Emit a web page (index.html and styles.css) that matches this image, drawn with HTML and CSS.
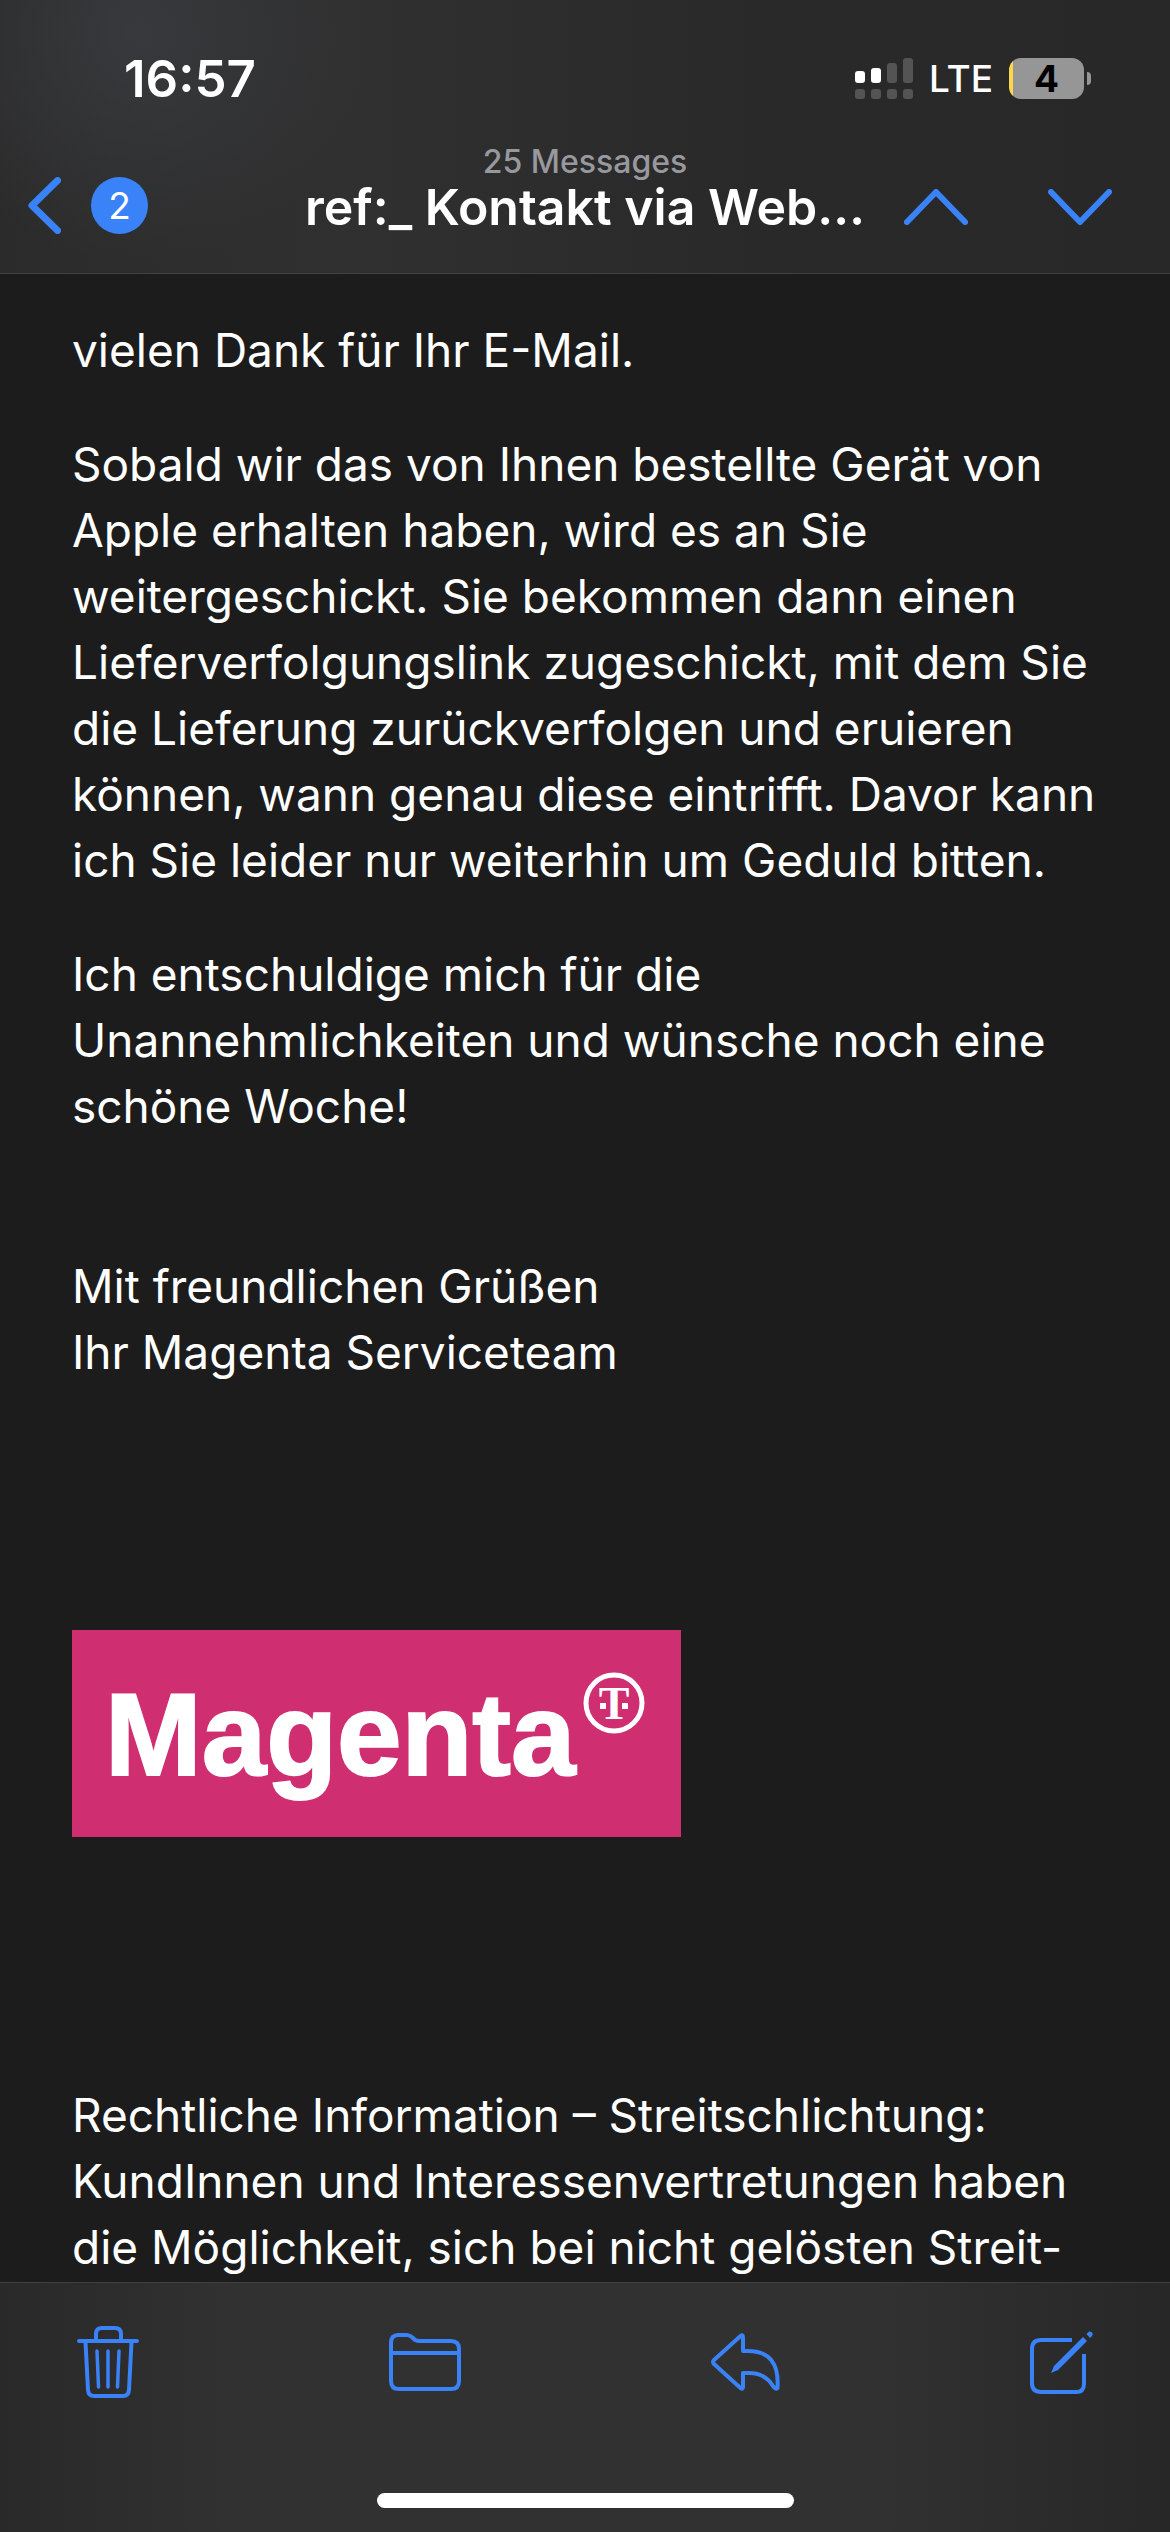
FILE: index.html
```html
<!DOCTYPE html>
<html lang="de">
<head>
<meta charset="utf-8">
<meta name="viewport" content="width=device-width, initial-scale=1">
<title>Mail</title>
<link rel="stylesheet" href="styles.css">
</head>
<body>
<header class="top">
  <div class="status">
    <time class="clock">16:57</time>
    <div class="status-right">
      <svg class="signal" viewBox="0 0 58 41" width="58" height="41" role="img" aria-label="Signal">
        <g fill="#fff"><rect y="13" width="10" height="12" rx="3"/><rect x="16" y="10" width="10" height="15" rx="3"/></g>
        <g fill="#545454"><rect x="32" y="5" width="10" height="20" rx="3"/><rect x="48" width="10" height="25" rx="3"/>
        <rect y="31" width="10" height="10" rx="3"/><rect x="16" y="31" width="10" height="10" rx="3"/><rect x="32" y="31" width="10" height="10" rx="3"/><rect x="48" y="31" width="10" height="10" rx="3"/></g>
      </svg>
      <span class="network">LTE</span>
      <div class="battery"><span class="level">4</span><span class="nub"></span></div>
    </div>
  </div>
  <nav class="nav">
    <button class="back" aria-label="Back">
      <svg viewBox="0 0 33 57" width="33" height="57"><path d="M29.500 3.500 4 28.500 29.500 53.500" fill="none" stroke="currentColor" stroke-width="7" stroke-linecap="round" stroke-linejoin="round"/></svg>
      <span class="badge">2</span>
    </button>
    <div class="heading">
      <p class="count">25 Messages</p>
      <h1 class="title">ref:_ Kontakt via Web…</h1>
    </div>
    <div class="steps">
      <button aria-label="Previous message"><svg viewBox="0 0 64 36" width="64" height="36"><path d="M3 33 32 3 61 33" fill="none" stroke="currentColor" stroke-width="6" stroke-linecap="round" stroke-linejoin="round"/></svg></button>
      <button aria-label="Next message"><svg viewBox="0 0 64 36" width="64" height="36"><path d="M3 3 32 33 61 3" fill="none" stroke="currentColor" stroke-width="6" stroke-linecap="round" stroke-linejoin="round"/></svg></button>
    </div>
  </nav>
</header>

<main class="message">
  <p>vielen Dank für Ihr E-Mail.</p>
  <p>Sobald wir das von Ihnen bestellte Gerät von Apple erhalten haben, wird es an Sie weitergeschickt. Sie bekommen dann einen Lieferverfolgungslink zugeschickt, mit dem Sie die Lieferung zurückverfolgen und eruieren können, wann genau diese eintrifft. Davor kann ich Sie leider nur weiterhin um Geduld bitten.</p>
  <p>Ich entschuldige mich für die Unannehmlichkeiten und wünsche noch eine schöne Woche!</p>
  <p class="closing">Mit freundlichen Grüßen<br>Ihr Magenta Serviceteam</p>
  <svg class="logo" viewBox="0 0 609 207" width="609" height="207" role="img" aria-label="Magenta">
    <rect width="609" height="207" fill="#cf2e70"/>
    <text class="logo-word" x="33" y="145">Magenta</text>
    <circle cx="542" cy="73" r="28" fill="none" stroke="#fff" stroke-width="5"/>
    <text class="logo-t" x="542" y="89" text-anchor="middle">T</text>
    <path d="M528 73h6v6h-6zM550 73h6v6h-6z" fill="#fff"/>
  </svg>
  <p>Rechtliche Information – Streitschlichtung: KundInnen und Interessenvertretungen haben die Möglichkeit, sich bei nicht gelösten Streit-</p>
</main>

<footer class="bottom">
  <div class="tools">
    <button aria-label="Delete">
      <svg viewBox="0 0 62 72" width="62" height="72" fill="none" stroke="currentColor" stroke-width="4" stroke-linecap="round" stroke-linejoin="round">
        <path d="M2 15H60M19 14V8Q19 2 25 2H38Q44 2 44 8V14M8.500 16 11 64Q11.500 70 17 70H46Q51.500 70 52 64L54.500 16"/>
        <path d="M20 25 21.500 61M31 25V61M42 25 40.500 61" stroke-width="3.500"/>
      </svg>
    </button>
    <button aria-label="Move to folder">
      <svg viewBox="0 0 72 58" width="72" height="58" fill="none" stroke="currentColor" stroke-width="4" stroke-linejoin="round">
        <path d="M2 20V10Q2 2 9 2H18Q21 2 24 5L26 7Q28 8 31 8H62Q70 8 70 16V48Q70 56 62 56H10Q2 56 2 48V20H70"/>
      </svg>
    </button>
    <button aria-label="Reply">
      <svg viewBox="0 0 69 58" width="69" height="58" fill="none" stroke="currentColor" stroke-width="4" stroke-linejoin="round">
        <path d="M32 18V4Q32 1 29.500 3L3 27Q1 29 3 31L29.500 55Q32 57 32 54V40H38Q54 40 62 53Q64.500 57 66.500 55Q69 18 37 18Z"/>
      </svg>
    </button>
    <button aria-label="New message">
      <svg viewBox="0 0 63 63" width="63" height="63" fill="none" stroke="currentColor" stroke-width="4">
        <path d="M42 9H11Q2 9 2 18V52Q2 61 11 61H46Q54 61 54 53V23"/>
        <path d="M21 42 24 35 53 6 57 10 28 39ZM56.500 3 59 0.500Q61 0 62.500 2Q63 4 62 5L60 7Z" fill="currentColor" stroke="none"/>
      </svg>
    </button>
  </div>
  <div class="home"></div>
</footer>
</body>
</html>
```
FILE: styles.css
```css
* { box-sizing: border-box; }

body {
  margin: 0;
  height: 100vh;
  display: flex;
  flex-direction: column;
  background: #1c1c1c;
  color: #fff;
  font-family: Inter, "Liberation Sans", sans-serif;
}

button {
  padding: 0;
  border: 0;
  background: none;
  color: #3a82f7;
  font: inherit;
  display: flex;
  align-items: center;
}

h1, p { margin: 0; }
svg { display: block; flex: none; }

.top {
  flex: none;
  border-bottom: 1px solid #414141;
  background:
    radial-gradient(circle at 12% 12%, #37393c, rgba(55, 57, 60, 0) 230px),
    linear-gradient(90deg, #2b2b2b, #303030 30%, #292929 65%, #282828);
}

.status {
  height: 144px;
  padding: 12px 79px 0 124px;
  display: flex;
  align-items: center;
  justify-content: space-between;
}

.clock {
  font-size: 51px;
  font-weight: 600;
}

.status-right {
  display: flex;
  align-items: center;
  gap: 16px;
}

.network {
  font-size: 37px;
  font-weight: 500;
}

.battery {
  display: flex;
  align-items: center;
  gap: 3px;
}

.level {
  width: 75px;
  height: 41px;
  border-radius: 12px;
  background: linear-gradient(90deg, #fbd84b 4px, #969696 4px);
  color: #000;
  font-size: 37px;
  font-weight: 700;
  line-height: 41px;
  text-align: center;
}

.nub {
  width: 4px;
  height: 13px;
  border-radius: 0 4px 4px 0;
  background: #969696;
}

.nav {
  padding-bottom: 39px;
  display: grid;
  grid-template-columns: 1fr auto 1fr;
  align-items: end;
}

.back {
  padding-left: 28px;
  gap: 30px;
}

.badge {
  width: 57px;
  height: 57px;
  border-radius: 50%;
  background: #3a82f7;
  color: #fff;
  font-size: 37px;
  line-height: 57px;
  text-align: center;
}

.heading { text-align: center; }

.count {
  color: #98989f;
  font-size: 32px;
  font-weight: 500;
  line-height: 36px;
}

.title {
  font-size: 50px;
  font-weight: 600;
  line-height: 54px;
  white-space: nowrap;
}

.steps {
  height: 54px;
  padding-right: 58px;
  display: flex;
  justify-content: flex-end;
  gap: 80px;
}

.message {
  flex: 1;
  min-height: 0;
  padding: 43px 72px 0;
  overflow-y: auto;
  scrollbar-width: none;
  font-size: 46px;
  line-height: 66px;
}

.message p + p { margin-top: 48px; }
.message p + .closing { margin-top: 114px; }
.logo { margin: 245px 0; }

.logo-word {
  fill: #fff;
  stroke: #fff;
  stroke-width: 2px;
  font: 700 116px "Liberation Sans", sans-serif;
}

.logo-t {
  fill: #fff;
  font: 700 46px "Liberation Serif", serif;
}

.bottom {
  flex: none;
  height: 250px;
  padding: 43px 77px 24px;
  border-top: 1px solid #414141;
  background: linear-gradient(90deg, #292929, #313131 20%, #313131 75%, #272727);
  display: flex;
  flex-direction: column;
  justify-content: space-between;
}

.tools {
  height: 72px;
  display: flex;
  justify-content: space-between;
  align-items: center;
}

.home {
  width: 417px;
  height: 15px;
  border-radius: 8px;
  background: #fff;
  align-self: center;
}
```
